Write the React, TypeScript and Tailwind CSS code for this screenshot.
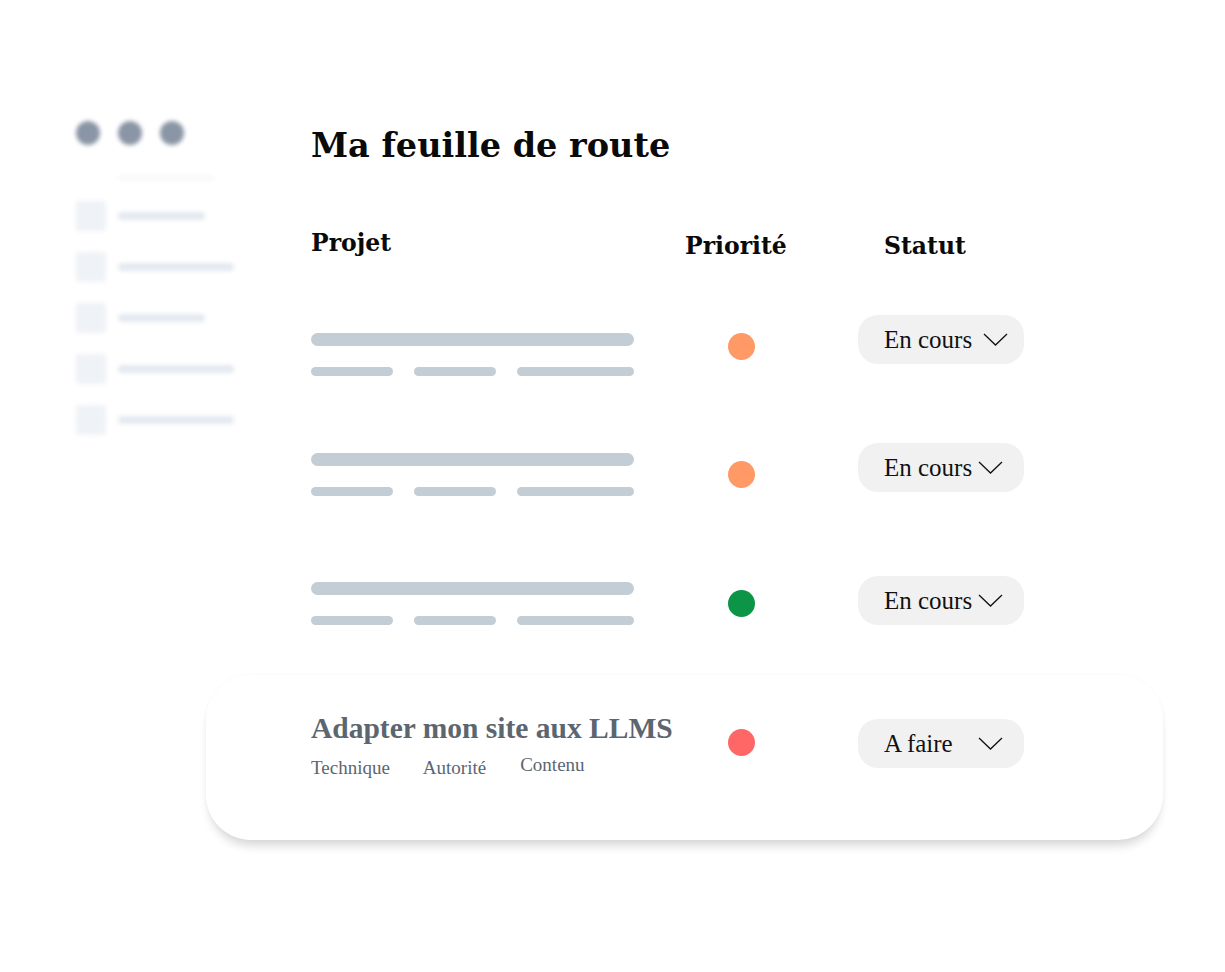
import React from "react";

const serifBold = "font-['DejaVu_Serif',serif] font-bold";
const serif = "font-['Liberation_Serif','Times_New_Roman',serif]";

const sideItems = [87, 116, 87, 116, 116];

const Chevron = () => (
  <svg width="25" height="13" viewBox="0 0 25 13" fill="none">
    <polyline points="1,1 12.5,12 24,1" stroke="#111" strokeWidth="1.3" />
  </svg>
);

const StatusPill = ({ label, shift = false }: { label: string; shift?: boolean }) => (
  <div className="flex h-[49px] w-[166px] items-center rounded-[20px] bg-[#f1f1f1] pl-[26px]">
    <span className={`${serif} w-[94px] text-[25px] leading-none text-[#111]`}>{label}</span>
    <span className={shift ? "ml-[5px] flex" : "flex"}>
      <Chevron />
    </span>
  </div>
);

const Placeholder = () => (
  <div className="flex flex-col">
    <div className="h-[13px] w-[323px] rounded-full bg-[#c3cdd5]" />
    <div className="mt-[21px] flex gap-[21px]">
      <div className="h-[9px] w-[82px] rounded-full bg-[#c3cdd5]" />
      <div className="h-[9px] w-[82px] rounded-full bg-[#c3cdd5]" />
      <div className="h-[9px] w-[117px] rounded-full bg-[#c3cdd5]" />
    </div>
  </div>
);

const Dot = ({ color }: { color: string }) => (
  <div className={`ml-[43px] h-[27px] w-[27px] rounded-full ${color}`} />
);

const rows = [
  { h: "h-[128px]", bars: "mt-[18px]", dot: "mt-[18px]", color: "bg-[#ff9966]", shift: true },
  { h: "h-[133px]", bars: "mt-[10px]", dot: "mt-[18px]", color: "bg-[#ff9966]", shift: false },
  { h: "h-[99px]", bars: "mt-[6px]", dot: "mt-[14px]", color: "bg-[#0c9447]", shift: false },
];

const App = () => {
  return (
    <div className="h-[972px] w-[1225px] overflow-hidden bg-white">
      <div className="flex pl-[76px] pt-[121px]">
        {/* blurred sidebar */}
        <div className="w-[130px] shrink-0 blur-[2px]">
          <div className="flex gap-[18px]">
            <div className="h-[24px] w-[24px] rounded-full bg-[#8a95a5]" />
            <div className="h-[24px] w-[24px] rounded-full bg-[#8a95a5]" />
            <div className="h-[24px] w-[24px] rounded-full bg-[#8a95a5]" />
          </div>
          <div className="ml-[42px] mt-[30px] h-[6px] w-[96px] rounded-full bg-[#f8f9fa]" />
          <div className="mt-[20px] flex flex-col gap-[21px]">
            {sideItems.map((w, i) => (
              <div key={i} className="flex items-center gap-[12px]">
                <div className="h-[30px] w-[30px] shrink-0 rounded-[3px] bg-[#eff2f6]" />
                <div className="h-[8px] shrink-0 rounded-full bg-[#e4e9f0]" style={{ width: w }} />
              </div>
            ))}
          </div>
        </div>

        {/* main */}
        <div className="flex w-[957px] shrink-0 flex-col">
          <div className="pl-[105px]">
            <h1 className={`${serifBold} mt-[8px] text-[33.5px] leading-none text-[#0a0a0a]`}>
              Ma feuille de route
            </h1>
            <div className={`${serifBold} mt-[69px] flex h-[24px] text-[23.5px] leading-none text-[#0a0a0a]`}>
              <div className="w-[374px]">Projet</div>
              <div className="mt-[3px] w-[173px]">Priorité</div>
              <div className="mt-[3px] pl-[26px]">Statut</div>
            </div>
            <div className="mt-[59px] flex flex-col">
              {rows.map((r, i) => (
                <div key={i} className={`flex items-start ${r.h}`}>
                  <div className={`w-[374px] ${r.bars}`}>
                    <Placeholder />
                  </div>
                  <div className={`w-[173px] ${r.dot}`}>
                    <Dot color={r.color} />
                  </div>
                  <StatusPill label="En cours" shift={r.shift} />
                </div>
              ))}
            </div>
          </div>

          <div className="h-[165px] rounded-[45px] bg-white pl-[105px] pt-[39px] shadow-[0_9px_10px_-3px_rgba(0,0,0,0.15),0_0_4px_rgba(0,0,0,0.03)]">
            <div className="flex items-start">
              <div className="w-[374px] text-[#5b6670]">
                <div className={`${serif} text-[29.5px] font-bold leading-none`}>
                  Adapter mon site aux LLMS
                </div>
                <div className={`${serif} mt-[12px] flex items-start text-[19px] leading-none`}>
                  <span className="mt-[3px]">Technique</span>
                  <span className="ml-[33px] mt-[3px]">Autorité</span>
                  <span className="ml-[34px]">Contenu</span>
                </div>
              </div>
              <div className="mt-[15px] w-[173px]">
                <Dot color="bg-[#ff6666]" />
              </div>
              <div className="mt-[5px]">
                <StatusPill label="A faire" />
              </div>
            </div>
          </div>
        </div>
      </div>
    </div>
  );
};

export default App;
